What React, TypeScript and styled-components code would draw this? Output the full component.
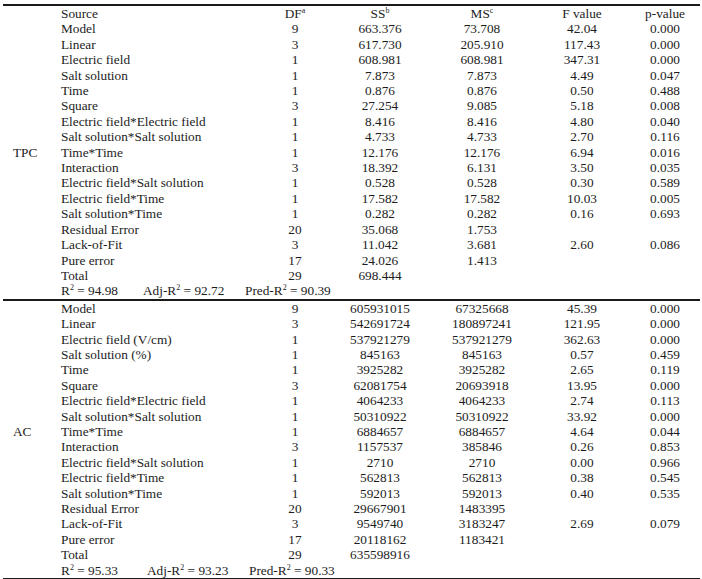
import React from "react";
import styled, { createGlobalStyle } from "styled-components";

const Global = createGlobalStyle`
  html, body { margin: 0; padding: 0; background: #ffffff; }
  body { font-family: "Liberation Serif", "Times New Roman", serif; color: #1c1c1c; }
`;

const Page = styled.div`
  padding: 4px 2px 0 3px;
  width: 697px;
`;

const Table = styled.table`
  width: 697px;
  border-collapse: collapse;
  table-layout: fixed;
  font-size: 13.3px;
  line-height: 15.4px;
  border-top: 2px solid #1a1a1a;
  border-bottom: 2px solid #1a1a1a;
`;

const Col = styled.col<{ $w: number }>`
  width: ${(p) => p.$w}px;
`;

const Row = styled.tr<{ $divider?: boolean }>`
  ${(p) => (p.$divider ? "border-top: 2px solid #1a1a1a;" : "")}
`;

const Label = styled.td`
  padding: 0 0 0 10px;
  vertical-align: middle;
  text-align: left;
  white-space: nowrap;
`;

const Source = styled.td`
  padding: 0;
  text-align: left;
  white-space: nowrap;
  height: 15.4px;
`;

const Num = styled.td`
  padding: 0;
  text-align: center;
  white-space: nowrap;
`;

const Sup = styled.sup`
  font-size: 8px;
  line-height: 0;
  vertical-align: 5px;
`;

const StatCell = styled.td`
  padding: 0;
  white-space: nowrap;
  height: 15.4px;
`;

const Stat = styled.span<{ $w?: number }>`
  display: inline-block;
  width: ${(p) => (p.$w ? `${p.$w}px` : "auto")};
`;

type R = [string, string, string, string?, string?, string?];

const tpc: R[] = [
  ["Model", "9", "663.376", "73.708", "42.04", "0.000"],
  ["Linear", "3", "617.730", "205.910", "117.43", "0.000"],
  ["Electric field", "1", "608.981", "608.981", "347.31", "0.000"],
  ["Salt solution", "1", "7.873", "7.873", "4.49", "0.047"],
  ["Time", "1", "0.876", "0.876", "0.50", "0.488"],
  ["Square", "3", "27.254", "9.085", "5.18", "0.008"],
  ["Electric field*Electric field", "1", "8.416", "8.416", "4.80", "0.040"],
  ["Salt solution*Salt solution", "1", "4.733", "4.733", "2.70", "0.116"],
  ["Time*Time", "1", "12.176", "12.176", "6.94", "0.016"],
  ["Interaction", "3", "18.392", "6.131", "3.50", "0.035"],
  ["Electric field*Salt solution", "1", "0.528", "0.528", "0.30", "0.589"],
  ["Electric field*Time", "1", "17.582", "17.582", "10.03", "0.005"],
  ["Salt solution*Time", "1", "0.282", "0.282", "0.16", "0.693"],
  ["Residual Error", "20", "35.068", "1.753"],
  ["Lack-of-Fit", "3", "11.042", "3.681", "2.60", "0.086"],
  ["Pure error", "17", "24.026", "1.413"],
  ["Total", "29", "698.444"],
];

const ac: R[] = [
  ["Model", "9", "605931015", "67325668", "45.39", "0.000"],
  ["Linear", "3", "542691724", "180897241", "121.95", "0.000"],
  ["Electric field (V/cm)", "1", "537921279", "537921279", "362.63", "0.000"],
  ["Salt solution (%)", "1", "845163", "845163", "0.57", "0.459"],
  ["Time", "1", "3925282", "3925282", "2.65", "0.119"],
  ["Square", "3", "62081754", "20693918", "13.95", "0.000"],
  ["Electric field*Electric field", "1", "4064233", "4064233", "2.74", "0.113"],
  ["Salt solution*Salt solution", "1", "50310922", "50310922", "33.92", "0.000"],
  ["Time*Time", "1", "6884657", "6884657", "4.64", "0.044"],
  ["Interaction", "3", "1157537", "385846", "0.26", "0.853"],
  ["Electric field*Salt solution", "1", "2710", "2710", "0.00", "0.966"],
  ["Electric field*Time", "1", "562813", "562813", "0.38", "0.545"],
  ["Salt solution*Time", "1", "592013", "592013", "0.40", "0.535"],
  ["Residual Error", "20", "29667901", "1483395"],
  ["Lack-of-Fit", "3", "9549740", "3183247", "2.69", "0.079"],
  ["Pure error", "17", "20118162", "1183421"],
  ["Total", "29", "635598916"],
];

type Block = {
  name: string;
  rows: R[];
  r2: string;
  adj: string;
  pred: string;
  w1: number;
  w2: number;
};

const blocks: Block[] = [
  { name: "TPC", rows: tpc, r2: "94.98", adj: "92.72", pred: "90.39", w1: 82, w2: 102 },
  { name: "AC", rows: ac, r2: "95.33", adj: "93.23", pred: "90.33", w1: 86, w2: 102 },
];

const DataRow: React.FC<{ r: R; label?: React.ReactNode; divider?: boolean }> = ({ r, label, divider }) => (
  <Row $divider={divider}>
    {label}
    <Source>{r[0]}</Source>
    <Num>{r[1]}</Num>
    <Num>{r[2]}</Num>
    <Num>{r[3] ?? ""}</Num>
    <Num>{r[4] ?? ""}</Num>
    <Num>{r[5] ?? ""}</Num>
  </Row>
);

export default function App() {
  return (
    <>
      <Global />
      <Page>
        <Table>
          <colgroup>
            <Col $w={58} />
            <Col $w={199} />
            <Col $w={70} />
            <Col $w={100} />
            <Col $w={104} />
            <Col $w={96} />
            <Col $w={70} />
          </colgroup>
          <tbody>
            <Row>
              <Label />
              <Source>Source</Source>
              <Num>
                DF<Sup>a</Sup>
              </Num>
              <Num>
                SS<Sup>b</Sup>
              </Num>
              <Num>
                MS<Sup>c</Sup>
              </Num>
              <Num>F value</Num>
              <Num>p-value</Num>
            </Row>
            {blocks.map((b, bi) => (
              <React.Fragment key={b.name}>
                {b.rows.map((r, i) => (
                  <DataRow
                    key={r[0] + i}
                    r={r}
                    divider={bi > 0 && i === 0}
                    label={i === 0 ? <Label rowSpan={b.rows.length}>{b.name}</Label> : undefined}
                  />
                ))}
                <Row>
                  <Label />
                  <StatCell colSpan={6}>
                    <Stat $w={b.w1}>
                      R<Sup>2</Sup> = {b.r2}
                    </Stat>
                    <Stat $w={b.w2}>
                      Adj-R<Sup>2</Sup> = {b.adj}
                    </Stat>
                    <Stat>
                      Pred-R<Sup>2</Sup> = {b.pred}
                    </Stat>
                  </StatCell>
                </Row>
              </React.Fragment>
            ))}
          </tbody>
        </Table>
      </Page>
    </>
  );
}
